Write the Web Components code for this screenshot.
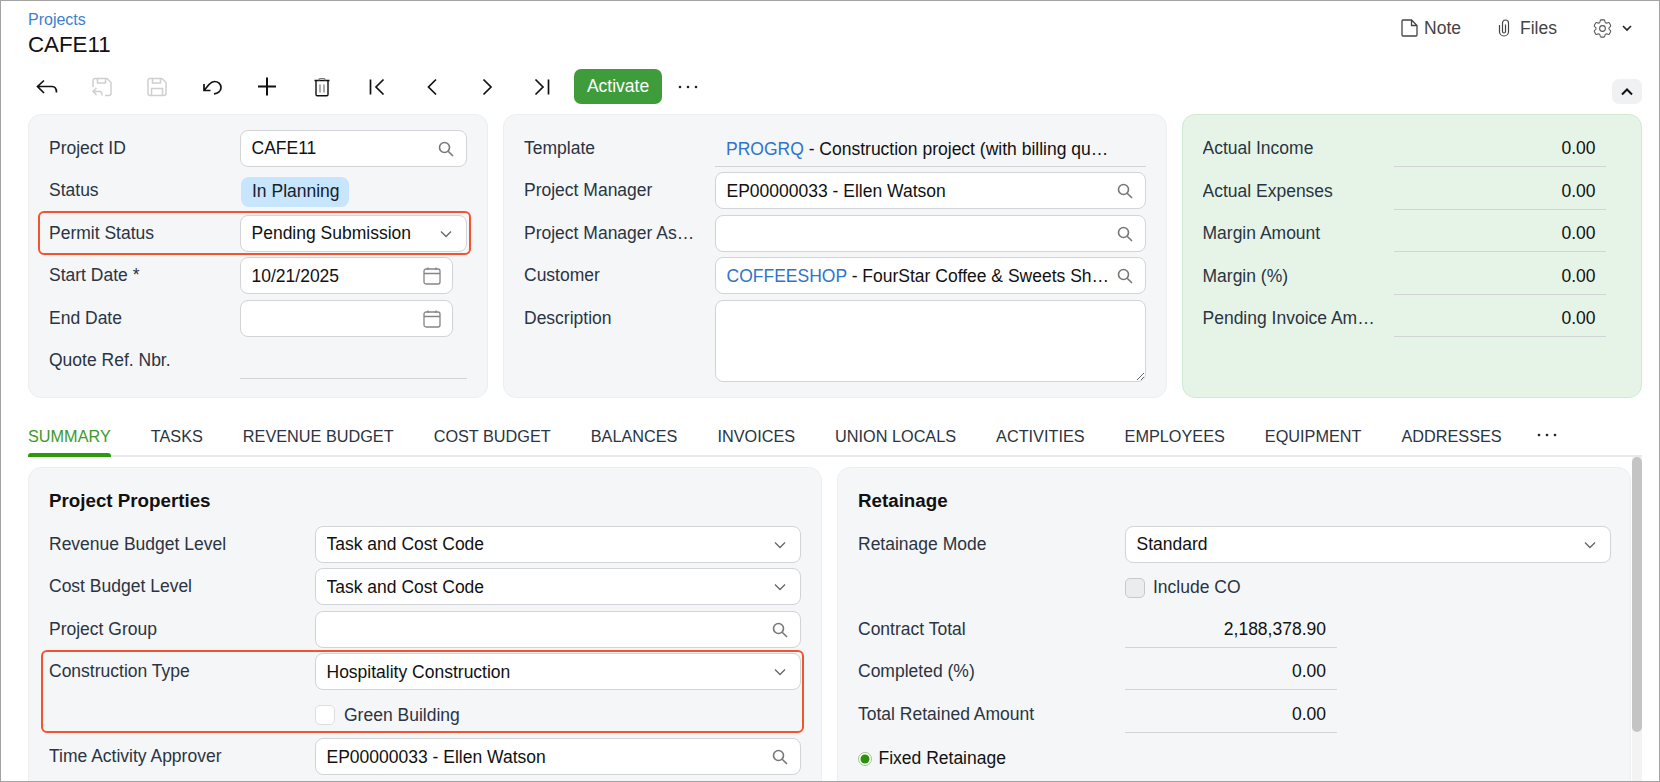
<!DOCTYPE html>
<html>
<head>
<meta charset="utf-8">
<title>Projects</title>
<style>
  html, body { margin: 0; padding: 0; background: #fff; }
  body { font-family: "Liberation Sans", Arial, sans-serif; font-size: 17.5px; color: #1f2a37; }
</style>
</head>
<body>
<pm-app>
  <pm-header crumb="Projects" heading="CAFE11"></pm-header>

  <pm-toolbar>
    <pm-tool icon="back"></pm-tool>
    <pm-tool icon="saveback" disabled></pm-tool>
    <pm-tool icon="save" disabled></pm-tool>
    <pm-tool icon="undo"></pm-tool>
    <pm-tool icon="plus"></pm-tool>
    <pm-tool icon="trash"></pm-tool>
    <pm-tool icon="first"></pm-tool>
    <pm-tool icon="prev"></pm-tool>
    <pm-tool icon="next"></pm-tool>
    <pm-tool icon="last"></pm-tool>
    <pm-button>Activate</pm-button>
    <pm-dots></pm-dots>
  </pm-toolbar>

  <pm-top>
    <pm-card>
      <pm-row label="Project ID"><pm-field kind="search">CAFE11</pm-field></pm-row>
      <pm-row label="Status"><pm-chip>In Planning</pm-chip></pm-row>
      <pm-marked style="--l:-11px;--r:-4px;--t:-4px;--b:2.5px">
        <pm-row label="Permit Status"><pm-field kind="select">Pending Submission</pm-field></pm-row>
      </pm-marked>
      <pm-row label="Start Date *"><pm-field kind="date" narrow>10/21/2025</pm-field></pm-row>
      <pm-row label="End Date"><pm-field kind="date" narrow></pm-field></pm-row>
      <pm-row label="Quote Ref. Nbr."><pm-value></pm-value></pm-row>
    </pm-card>

    <pm-card>
      <pm-row label="Template"><pm-value align="left"><pm-link>PROGRQ</pm-link> - Construction project (with billing quantities)</pm-value></pm-row>
      <pm-row label="Project Manager"><pm-field kind="search">EP00000033 - Ellen Watson</pm-field></pm-row>
      <pm-row label="Project Manager Assistant"><pm-field kind="search"></pm-field></pm-row>
      <pm-row label="Customer"><pm-field kind="search"><pm-link>COFFEESHOP</pm-link> - FourStar Coffee &amp; Sweets Shop</pm-field></pm-row>
      <pm-row label="Description" tall><pm-area></pm-area></pm-row>
    </pm-card>

    <pm-card variant="green">
      <pm-row label="Actual Income"><pm-value align="right" narrow>0.00</pm-value></pm-row>
      <pm-row label="Actual Expenses"><pm-value align="right" narrow>0.00</pm-value></pm-row>
      <pm-row label="Margin Amount"><pm-value align="right" narrow>0.00</pm-value></pm-row>
      <pm-row label="Margin (%)"><pm-value align="right" narrow>0.00</pm-value></pm-row>
      <pm-row label="Pending Invoice Amount"><pm-value align="right" narrow>0.00</pm-value></pm-row>
    </pm-card>
  </pm-top>

  <pm-tabs>
    <pm-tab active>SUMMARY</pm-tab>
    <pm-tab>TASKS</pm-tab>
    <pm-tab>REVENUE BUDGET</pm-tab>
    <pm-tab>COST BUDGET</pm-tab>
    <pm-tab>BALANCES</pm-tab>
    <pm-tab>INVOICES</pm-tab>
    <pm-tab>UNION LOCALS</pm-tab>
    <pm-tab>ACTIVITIES</pm-tab>
    <pm-tab>EMPLOYEES</pm-tab>
    <pm-tab>EQUIPMENT</pm-tab>
    <pm-tab>ADDRESSES</pm-tab>
    <pm-dots></pm-dots>
  </pm-tabs>

  <pm-body>
    <pm-card section heading="Project Properties">
      <pm-row label="Revenue Budget Level" wide><pm-field kind="select">Task and Cost Code</pm-field></pm-row>
      <pm-row label="Cost Budget Level" wide><pm-field kind="select">Task and Cost Code</pm-field></pm-row>
      <pm-row label="Project Group" wide><pm-field kind="search"></pm-field></pm-row>
      <pm-marked style="--l:-8px;--r:-3px;--t:-3.5px;--b:5.5px">
        <pm-row label="Construction Type" wide><pm-field kind="select">Hospitality Construction</pm-field></pm-row>
        <pm-row wide><pm-check>Green Building</pm-check></pm-row>
      </pm-marked>
      <pm-row label="Time Activity Approver" wide><pm-field kind="search">EP00000033 - Ellen Watson</pm-field></pm-row>
    </pm-card>

    <pm-card section heading="Retainage" style="--col:267px;--value-pad:11px;padding-right:19px">
      <pm-row label="Retainage Mode" wide><pm-field kind="select">Standard</pm-field></pm-row>
      <pm-row wide><pm-check disabled>Include CO</pm-check></pm-row>
      <pm-row label="Contract Total" wide><pm-value align="right" narrow>2,188,378.90</pm-value></pm-row>
      <pm-row label="Completed (%)" wide><pm-value align="right" narrow>0.00</pm-value></pm-row>
      <pm-row label="Total Retained Amount" wide><pm-value align="right" narrow>0.00</pm-value></pm-row>
      <pm-radio>Fixed Retainage</pm-radio>
    </pm-card>

    <pm-scroll></pm-scroll>
  </pm-body>
</pm-app>

<script>
// toolbar icons are drawn on a 24 box, everything else has its own small box
const TOOL_ICONS = {
  back: '<path d="M9 5.5 2.5 11.5 9 18M2.5 11.5H17C20 11.5 21.5 13.5 21.5 17.5"/>',
  saveback: '<path d="M3 12V5.5a2 2 0 0 1 2-2H17L21 7.5V18.5a2 2 0 0 1-2 2H15M7.5 3.5V8H15.5V3.5M6.5 13 3 16.5 6.5 20M3 16.5H10C11.5 16.5 12 18 12 20.5"/>',
  save: '<path d="M5 3.5H17L21 7.5V18.5a2 2 0 0 1-2 2H5a2 2 0 0 1-2-2V5.5a2 2 0 0 1 2-2ZM7.5 3.5V8H15.5V3.5M6.5 20.5V13.5H17.5V20.5"/>',
  undo: '<path d="M4 9V15.5H10.5M4 15.5 9 9.5C11 7.5 13 6.5 14.5 6.5 18 6.5 21 9 21 12.5 21 16 18 18.8 14 18.8"/>',
  plus: '<path stroke-width="2" d="M12 2.5V20.5M3 11.5H21"/>',
  trash: '<path stroke-width="1.4" d="M4.5 5.5H19.5M6 5.5V19.5a1.2 1.2 0 0 0 1.2 1.2H16.8a1.2 1.2 0 0 0 1.2-1.2V5.5"/><path stroke-width="1.2" stroke="#777" d="M9 5.5V4.5a1 1 0 0 1 1-1H14a1 1 0 0 1 1 1V5.5M10 9.5V17.5M14 9.5V17.5"/>',
  first: '<path d="M5.5 4.5V19.5M18.5 4.5 11 12 18.5 19.5"/>',
  prev: '<path d="M16 4.5 8.5 12 16 19.5"/>',
  next: '<path d="M8.5 4.5 16 12 8.5 19.5"/>',
  last: '<path d="M5.5 4.5 13 12 5.5 19.5M18.5 4.5V19.5"/>'
};

const FIELD_ICONS = {
  search: '<svg style="margin-right:1px" width="16" height="16" viewBox="0 0 16 16" fill="none" stroke="#777" stroke-width="1.6"><circle cx="6.5" cy="6.5" r="5"/><path d="M10.2 10.2 15 15"/></svg>',
  select: '<svg style="margin:0 3px 0 0" width="12" height="8" viewBox="0 0 12 8" fill="none" stroke="#666" stroke-width="1.3"><path d="M1 1.5 6 6.5 11 1.5"/></svg>',
  date: '<svg width="18" height="18" viewBox="0 0 18 18" fill="none" stroke="#858585" stroke-width="1.3"><rect x="1" y="2" width="16" height="15" rx="2"/><path d="M1 6.5H17M5 .5V3M13 .5V3"/></svg>'
};

const GEAR = 'M9.594 3.94c.09-.542.56-.94 1.11-.94h2.593c.55 0 1.02.398 1.11.94l.213 1.281c.063.374.313.686.645.87.074.04.147.083.22.127.325.196.72.257 1.075.124l1.217-.456a1.125 1.125 0 0 1 1.37.49l1.296 2.247a1.125 1.125 0 0 1-.26 1.431l-1.003.827c-.293.241-.438.613-.43.992a7.723 7.723 0 0 1 0 .255c-.008.378.137.75.43.991l1.004.827c.424.35.534.955.26 1.43l-1.298 2.247a1.125 1.125 0 0 1-1.369.491l-1.217-.456c-.355-.133-.75-.072-1.076.124a6.47 6.47 0 0 1-.22.128c-.331.183-.581.495-.644.869l-.213 1.281c-.09.543-.56.94-1.11.94h-2.594c-.55 0-1.019-.398-1.11-.94l-.213-1.281c-.062-.374-.312-.686-.644-.87a6.52 6.52 0 0 1-.22-.127c-.325-.196-.72-.257-1.076-.124l-1.217.456a1.125 1.125 0 0 1-1.369-.49l-1.297-2.247a1.125 1.125 0 0 1 .26-1.431l1.004-.827c.292-.24.437-.613.43-.991a6.932 6.932 0 0 1 0-.255c.007-.38-.138-.751-.43-.992l-1.004-.827a1.125 1.125 0 0 1-.26-1.43l1.297-2.247a1.125 1.125 0 0 1 1.37-.491l1.216.456c.356.133.751.072 1.076-.124.072-.044.146-.086.22-.128.332-.183.582-.495.644-.869l.214-1.28Z';

// small helper so every element below stays a few lines
function define(name, render) {
  customElements.define(name, class extends HTMLElement {
    constructor() {
      super();
      this.attachShadow({ mode: 'open' });
    }
    connectedCallback() {
      if (!this.shadowRoot.innerHTML) this.shadowRoot.innerHTML = render(this);
    }
  });
}

define('pm-app', () => `
  <style>
    :host { display: flex; flex-direction: column; box-sizing: border-box; width: 1660px; height: 782px;
            border: 1px solid #a3a3a3; overflow: hidden; background: #fff; }
  </style>
  <slot></slot>`);

define('pm-header', (el) => `
  <style>
    :host { display: flex; flex: none; justify-content: space-between; padding: 9px 27px 0 27px; height: 50px; }
    .crumb { color: #3d7fd0; font-size: 16px; line-height: 20px; }
    .title { color: #111; font-size: 22.3px; line-height: 30px; }
    .actions { display: flex; align-items: center; height: 36px; color: #444; }
    .note { margin: 0 6px 0 0; }
    .clip { margin: 0 10px 0 37px; }
    .gear { margin: 0 8px 0 34px; }
    svg { display: block; }
  </style>
  <div>
    <div class="crumb">${el.getAttribute('crumb')}</div>
    <div class="title">${el.getAttribute('heading')}</div>
  </div>
  <div class="actions">
    <svg class="note" width="17" height="18" viewBox="0 0 17 18" fill="none" stroke="#444" stroke-width="1.3"><path d="M2 1H10.5L16 6.5V16a1 1 0 0 1-1 1H2a1 1 0 0 1-1-1V2a1 1 0 0 1 1-1ZM10.5 1V6.5H16"/></svg>
    <span>Note</span>
    <svg class="clip" width="12" height="18" viewBox="0 0 12 18" fill="none" stroke="#444" stroke-width="1.2"><path d="M7.5 5.5V12.5a1.5 1.5 0 0 1-3 0V4a3 3 0 0 1 6 0V12.5a4.5 4.5 0 0 1-9 0V6"/></svg>
    <span>Files</span>
    <svg class="gear" width="23" height="23" viewBox="0 0 24 24" fill="none" stroke="#555" stroke-width="1.1"><path d="${GEAR}"/><circle cx="12" cy="12" r="3"/></svg>
    <svg width="10" height="7" viewBox="0 0 10 7" fill="none" stroke="#222" stroke-width="1.6"><path d="M1 1 5 5 9 1"/></svg>
  </div>`);

define('pm-toolbar', () => `
  <style>
    :host { display: flex; flex: none; align-items: center; height: 35px; margin-top: 9px; padding: 0 17px 0 18.5px; }
    .collapse { margin-left: auto; align-self: flex-end; width: 30px; height: 25px; border-radius: 7px; background: #f0f1f2;
                display: flex; align-items: center; justify-content: center; }
  </style>
  <slot></slot>
  <div class="collapse">
    <svg width="12" height="8" viewBox="0 0 12 8" fill="none" stroke="#111" stroke-width="2"><path d="M1 6.5 6 1.5 11 6.5"/></svg>
  </div>`);

define('pm-tool', (el) => {
  const off = el.hasAttribute('disabled');
  return `
  <style>
    :host { display: flex; align-items: center; justify-content: center; width: 55px; height: 35px; flex: none; }
  </style>
  <svg width="24" height="24" viewBox="0 0 24 24" fill="none" stroke="${off ? '#cfcfcf' : '#111'}" stroke-width="${off ? 1.5 : 1.7}">${TOOL_ICONS[el.getAttribute('icon')]}</svg>`;
});

define('pm-button', () => `
  <style>
    :host { display: flex; align-items: center; justify-content: center; box-sizing: border-box; width: 88px; height: 35px;
            margin-left: 4.5px; border-radius: 7px; background: #3e9c3a; color: #fff; flex: none; }
  </style>
  <slot></slot>`);

define('pm-dots', () => `
  <style>
    :host { display: flex; align-items: center; margin-left: 15px; width: 22px; flex: none; }
    svg { display: block; }
  </style>
  <svg width="22" height="4" viewBox="0 0 22 4" fill="#222"><circle cx="3" cy="2" r="1.3"/><circle cx="11" cy="2" r="1.3"/><circle cx="19" cy="2" r="1.3"/></svg>`);

define('pm-top', () => `
  <style>
    :host { display: grid; flex: none; grid-template-columns: 460px 663.5px 460px; grid-template-rows: 284px; column-gap: 15px;
            height: 284px; margin: 10px 17px 0 27px; }
  </style>
  <slot></slot>`);

define('pm-card', (el) => {
  const heading = el.getAttribute('heading');
  return `
  <style>
    /* 14.98 top: half pixel rows snap down like the original does */
    :host { display: block; box-sizing: border-box; border: 1px solid #eceef0; border-radius: 13px; background: #f5f6f8;
            padding: 14.98px 20px 15px; min-height: 0; }
    :host([variant="green"]) { background: #e6f4e7; border-color: #cfe9d3; padding-top: 15px; }
    :host([section]) { width: 794px; flex: none; height: 340px; }
    h3 { margin: 0 0 5px; height: 38px; line-height: 36px; font-size: 18.75px; font-weight: bold; color: #111; }
  </style>
  ${heading ? `<h3>${heading}</h3>` : ''}
  <slot></slot>`;
});

define('pm-row', (el) => `
  <style>
    :host { display: grid; grid-template-columns: 191px minmax(0, 1fr); height: 42.5px; }
    :host([wide]) { grid-template-columns: var(--col, 266px) minmax(0, 1fr); }
    :host([tall]) { height: 82px; }
    .label { line-height: 36px; height: 36px; padding-right: 16px; color: #2a3442;
             white-space: nowrap; overflow: hidden; text-overflow: ellipsis; }
  </style>
  <div class="label">${el.getAttribute('label') || ''}</div>
  <div class="cell"><slot></slot></div>`);

define('pm-field', (el) => {
  const kind = el.getAttribute('kind');
  return `
  <style>
    :host { display: flex; align-items: center; box-sizing: border-box; height: 37px; border: 1px solid #d2d4d7; border-radius: 8px;
            background: #fff; padding: 1px 11px 0 10.5px; color: #111; }
    :host([narrow]) { width: 213px; }
    .text { flex: 1; min-width: 0; white-space: nowrap; overflow: hidden; text-overflow: ellipsis; margin-right: 5.5px; }
    svg { display: block; flex: none; }
  </style>
  <span class="text"><slot></slot></span>
  ${FIELD_ICONS[kind]}`;
});

define('pm-link', () => `
  <style>:host { display: inline; color: #2f74c8; }</style>
  <slot></slot>`);

define('pm-chip', () => `
  <style>
    :host { display: inline-flex; align-items: center; box-sizing: border-box; height: 30px; margin: 4.5px 0 0 1px;
            padding: 0 9px 0 11px; border-radius: 8px; background: #c7e5fc; color: #15202b; }
  </style>
  <slot></slot>`);

define('pm-value', (el) => `
  <style>
    :host { display: block; box-sizing: border-box; height: 37px; line-height: 37px; border-bottom: 1px solid #d2d4d7;
            padding: 0 var(--value-pad, 10px) 0 11px; color: #111; white-space: nowrap; overflow: hidden; text-overflow: ellipsis; }
    :host([align="right"]) { text-align: right; }
    :host([align="left"]) { padding-right: 36px; line-height: 39px; }
    :host([narrow]) { width: 212px; }
  </style>
  <slot></slot>`);

define('pm-area', () => `
  <style>
    :host { display: block; height: 82px; }
    textarea { display: block; box-sizing: border-box; width: 100%; height: 82px; resize: vertical; outline: none;
               border: 1px solid #d2d4d7; border-radius: 8px; background: #fff; margin: 0; }
  </style>
  <textarea></textarea>`);

define('pm-marked', () => `
  <style>
    :host { display: block; position: relative; }
    .box { position: absolute; left: var(--l); right: var(--r); top: var(--t); bottom: var(--b);
           border: 2px solid #f4532f; border-radius: 6px; pointer-events: none; }
  </style>
  <slot></slot>
  <div class="box"></div>`);

define('pm-tabs', () => `
  <style>
    :host { display: flex; flex: none; align-items: flex-start; gap: 40px; box-sizing: border-box; height: 41px; margin: 18px 17px 0 27px;
            border-bottom: 2px solid #e8e9eb; font-size: 16.25px; }
    ::slotted(pm-dots) { margin-left: -6px; height: 38px; }
  </style>
  <slot></slot>`);

define('pm-tab', () => `
  <style>
    :host { display: block; position: relative; height: 41px; line-height: 40px; color: #2a3442; white-space: nowrap; flex: none; }
    :host([active]) { color: #3c9a2c; }
    :host([active])::after { content: ""; position: absolute; left: 0; right: 0; top: 37px; height: 4px;
                             background: #2d9a0e; border-radius: 3px 3px 0 0; }
  </style>
  <slot></slot>`);

define('pm-check', (el) => `
  <style>
    :host { display: flex; align-items: center; height: 37px; gap: 9px; color: #2a3442; padding-top: 1px; }
    :host([disabled]) { gap: 8px; }
    .box { box-sizing: border-box; width: 20px; height: 20px; border-radius: 5px; border: 1px solid #dcdee0; background: #fff; flex: none; }
    :host([disabled]) .box { background: #ececec; border-color: #c9c9c9; }
  </style>
  <div class="box"></div><slot></slot>`);

define('pm-radio', () => `
  <style>
    :host { display: flex; align-items: center; height: 37px; gap: 6.5px; color: #111; padding-top: 2px; }
    svg { display: block; flex: none; }
  </style>
  <svg width="14" height="14" viewBox="0 0 14 14"><circle cx="7" cy="7" r="6.5" fill="#fff" stroke="#9ac98a"/><circle cx="7" cy="7" r="4.5" fill="#2d8f0c"/></svg>
  <slot></slot>`);

define('pm-body', () => `
  <style>
    :host { display: flex; flex: none; align-items: flex-start; gap: 15px; height: 324px; margin-left: 27px; margin-right: 17px; }
    ::slotted(pm-card) { margin-top: 10px; }
  </style>
  <slot></slot>`);

define('pm-scroll', () => `
  <style>
    :host { display: block; width: 10px; height: 324px; margin-left: -14px; background: #f3f3f3; flex: none; }
    .thumb { height: 275px; border-radius: 5px; background: #c4c4c4; }
  </style>
  <div class="thumb"></div>`);
</script>
</body>
</html>
